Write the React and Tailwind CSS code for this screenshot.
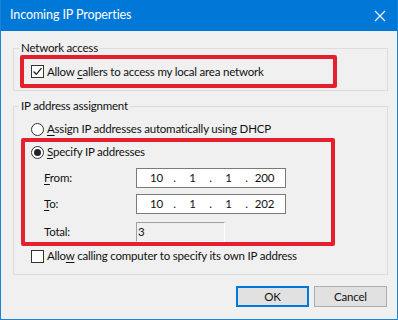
import React from 'react';

const font = { fontFamily: 'Lato, "Noto Sans", sans-serif' };

function CheckBox({ checked }) {
  return (
    <span className="w-[13px] h-[13px] border border-[#333] bg-white flex items-center justify-center shrink-0">
      {checked && (
        <svg width="11" height="11" viewBox="0 0 11 11">
          <path d="M1.5 5.5 L4.3 8.3 L9.5 2.2" fill="none" stroke="#222" strokeWidth="1.3" />
        </svg>
      )}
    </span>
  );
}

function Radio({ checked }) {
  return (
    <span className="w-[13px] h-[13px] rounded-full border border-[#333] bg-white flex items-center justify-center shrink-0">
      {checked && <span className="w-[7px] h-[7px] rounded-full bg-[#222]" />}
    </span>
  );
}

function IpField({ parts }) {
  return (
    <div className="w-[150px] h-[20px] border border-[#7a7a7a] bg-white flex items-center pl-[3px] text-[#111]">
      {parts.map((p, i) => (
        <React.Fragment key={i}>
          {i > 0 && <span className="w-[3px] text-center">.</span>}
          <span className="w-[33px] text-center">{p}</span>
        </React.Fragment>
      ))}
    </div>
  );
}

export default function App() {
  return (
    <div className="w-[398px] h-[320px] bg-[#1883d7] px-[1px] pb-[1px] flex flex-col text-[11.5px] tracking-[-0.2px] text-[#111]" style={font}>
      <div className="h-[31px] bg-[#0078d7] flex items-center justify-between pl-[9px] pr-[11px] text-white">
        <span className="text-[12.5px] tracking-[-0.1px]">Incoming IP Properties</span>
        <svg width="12" height="12" viewBox="0 0 12 12">
          <path d="M1 1 L11 11 M11 1 L1 11" stroke="white" strokeWidth="1.1" />
        </svg>
      </div>
      <div className="flex-1 bg-[#f0f0f0] flex flex-col pt-[10px]">
        <fieldset className="ml-[12px] mr-[9px] border border-[#dcdcdc] pb-[2px]">
          <legend className="ml-[5px] px-[2px] leading-[14px]">Network access</legend>
          <div className="ml-[6px] w-[317px] h-[33px] border-[4px] border-[#e5202e] rounded-[2px] flex items-center pl-[7px] gap-[3px]">
            <CheckBox checked />
            <span>Allow <u className="underline-offset-2">c</u>allers to access my local area network</span>
          </div>
        </fieldset>

        <fieldset className="ml-[12px] mr-[9px] mt-[8px] border border-[#dcdcdc] pb-[8px]">
          <legend className="ml-[5px] px-[2px] leading-[14px]">IP address assignment</legend>
          <div className="h-[16px] mt-[8px] mb-[1px] flex items-center pl-[17px] gap-[3px]">
            <Radio />
            <span><u className="underline-offset-2">A</u>ssign IP addresses automatically using DHCP</span>
          </div>
          <div className="ml-[7px] w-[314px] border-[4px] border-[#e5202e] rounded-[2px] flex flex-col">
            <div className="h-[20px] flex items-center pl-[6px] gap-[3px]">
              <Radio checked />
              <span><u className="underline-offset-2">S</u>pecify IP addresses</span>
            </div>
            <div className="mt-[6px] flex items-center pl-[19px]">
              <span className="w-[92px]"><u className="underline-offset-2">F</u>rom:</span>
              <IpField parts={['10', '1', '1', '200']} />
            </div>
            <div className="mt-[6px] flex items-center pl-[19px]">
              <span className="w-[92px]"><u className="underline-offset-2">T</u>o:</span>
              <IpField parts={['10', '1', '1', '202']} />
            </div>
            <div className="mt-[8px] flex items-center pl-[19px]">
              <span className="w-[92px]">Total:</span>
              <div className="w-[89px] h-[20px] border-t border-l border-[#a0a0a0] border-r border-b border-r-white border-b-white flex items-center pl-[1px]">3</div>
            </div>
          </div>
          <div className="h-[20px] flex items-center pl-[17px] gap-[3px]">
            <CheckBox />
            <span>Allo<u className="underline-offset-2">w</u> calling computer to specify its own IP address</span>
          </div>
        </fieldset>

        <div className="mt-[11px] mr-[10px] flex justify-end gap-[5px]">
          <button className="w-[73px] h-[21px] border-2 border-[#0078d7] bg-[#e1e1e1] flex items-center justify-center">OK</button>
          <button className="w-[73px] h-[21px] border border-[#adadad] bg-[#e1e1e1] flex items-center justify-center">Cancel</button>
        </div>
      </div>
    </div>
  );
}
